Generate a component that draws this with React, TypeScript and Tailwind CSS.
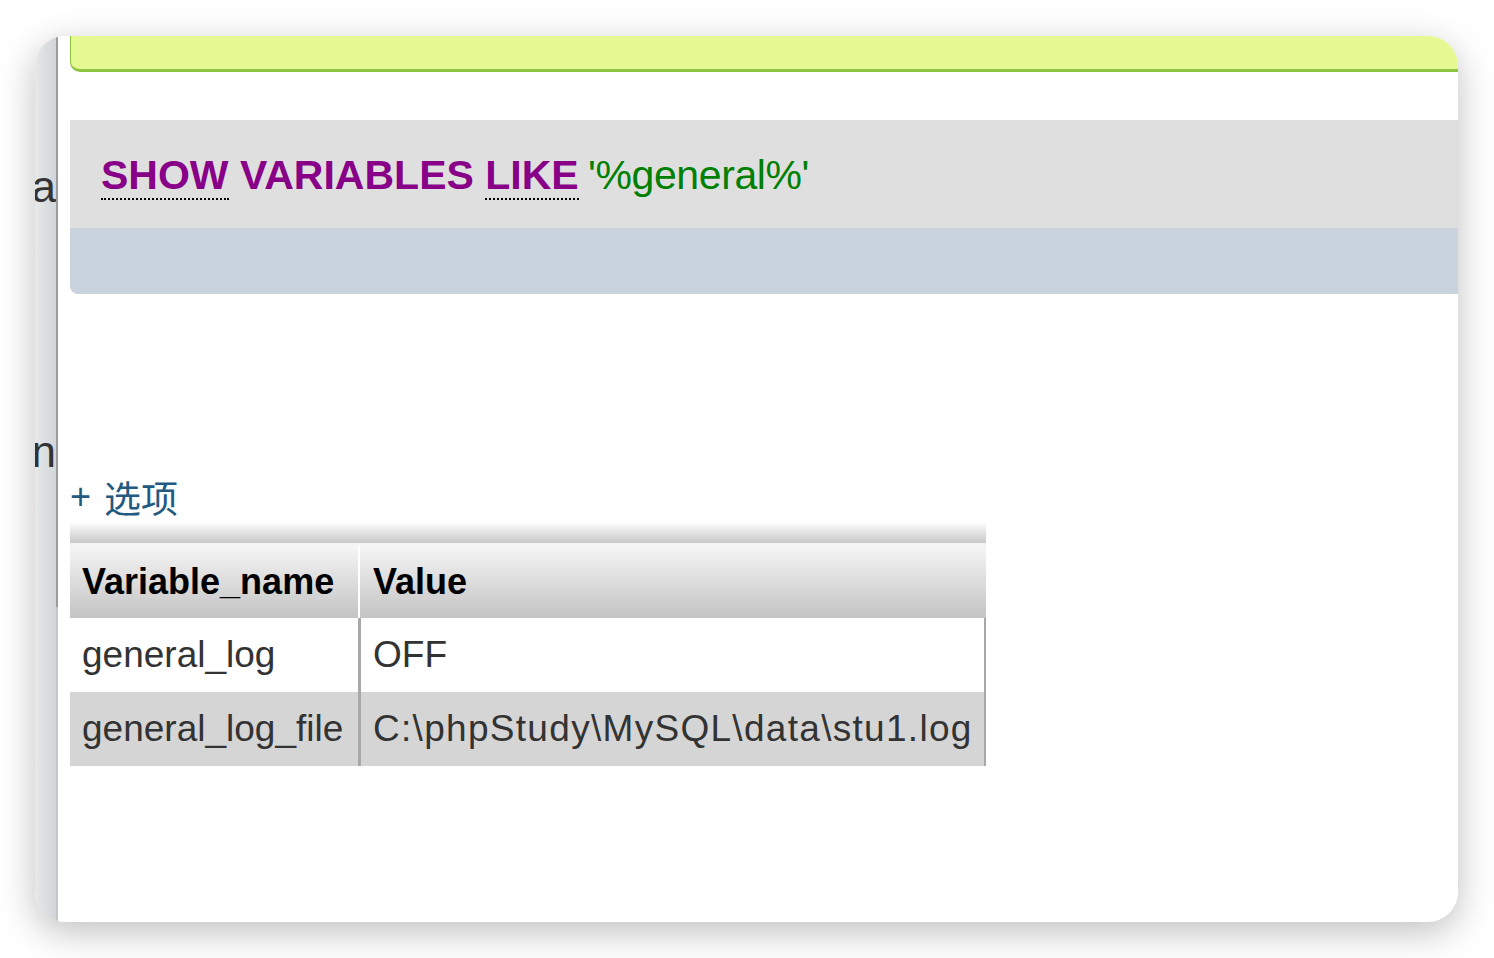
import React from 'react';

const font = { fontFamily: '"Liberation Sans", Arial, "Noto Sans CJK SC", sans-serif' };

const rows = [
  { name: 'general_log', value: 'OFF', odd: true },
  { name: 'general_log_file', value: 'C:\\phpStudy\\MySQL\\data\\stu1.log', odd: false },
];

const Sidebar = () => (
  <div className="flex h-full shrink-0">
    <div className="w-[21px] h-full overflow-hidden bg-gradient-to-r from-[#e6e8e9] to-[#d2d6d9] flex flex-col items-end text-[#333] text-[44px] leading-[44px]">
      <div className="mt-[129px]">a</div>
      <div className="mt-[221px]">n</div>
    </div>
    <div className="w-[2px] h-full flex flex-col">
      <div className="h-[571px] bg-[#9a9a9a]" />
      <div className="flex-1 bg-[#c4c7c9]" />
    </div>
  </div>
);

const SqlBox = () => (
  <div className="rounded-bl-[8px] overflow-hidden">
    <div className="h-[108px] bg-[#dfdfdf] pl-[31px] pt-[25px] text-[41px] whitespace-nowrap">
      <span className="font-bold text-[#880088] border-b-2 border-dotted border-black">SHOW</span>
      <span> </span>
      <span className="font-bold text-[#880088]">VARIABLES</span>
      <span> </span>
      <span className="font-bold text-[#880088] border-b-2 border-dotted border-black">LIKE</span>
      <span className="tracking-[-2px]"> </span>
      <span className="text-[#008000] tracking-[-0.4px]">'%general%'</span>
    </div>
    <div className="h-[66px] bg-[#c9d3dd]" />
  </div>
);

const VarTable = () => (
  <div className="w-[916px] mt-[5px]">
    <div className="h-[21px] bg-gradient-to-b from-[#ffffff] to-[#c8c8c8]" />
    <div className="h-[2px] bg-[#f4f4f4]" />
    <div className="flex h-[73px] bg-gradient-to-b from-[#f6f6f6] to-[#c4c4c4] text-[36px] font-bold text-black">
      <div className="w-[290px] pl-[12px] flex items-center border-r-2 border-white">Variable_name</div>
      <div className="flex-1 pl-[13px] flex items-center">Value</div>
    </div>
    {rows.map((r) => (
      <div
        key={r.name}
        className={`flex h-[74px] text-[37px] text-[#333] border-r-2 border-[#a8a8a8] ${r.odd ? 'bg-white' : 'bg-[#d5d5d5]'}`}
      >
        <div className="w-[291px] pl-[12px] flex items-center border-r-[3px] border-[#a8a8a8] whitespace-nowrap">{r.name}</div>
        <div className={`flex-1 pl-[12px] flex items-center whitespace-nowrap ${r.odd ? '' : 'tracking-[1.3px]'}`}>{r.value}</div>
      </div>
    ))}
  </div>
);

export default function App() {
  return (
    <div className="w-[1494px] h-[958px] bg-white pt-[36px] pl-[35px]" style={font}>
      <div className="w-[1423px] h-[886px] rounded-[30px] overflow-hidden bg-white flex shadow-[0_10px_36px_rgba(0,0,0,0.25)]">
        <Sidebar />
        <div className="flex-1 pl-[12px] min-w-0">
          <div className="h-[36px] bg-[#e5f992] border-l border-b-[3px] border-[#8cc540] rounded-bl-[10px]" />
          <div className="mt-[48px]">
            <SqlBox />
          </div>
          <div className="mt-[183px] h-[40px] leading-[40px] text-[34px] text-[#235a81] flex items-center">
            <span className="text-[36px]">+</span>
            <span className="ml-[13px] text-[37px]" style={{ fontFamily: '"Noto Sans CJK SC", sans-serif' }}>选项</span>
          </div>
          <VarTable />
        </div>
      </div>
    </div>
  );
}
